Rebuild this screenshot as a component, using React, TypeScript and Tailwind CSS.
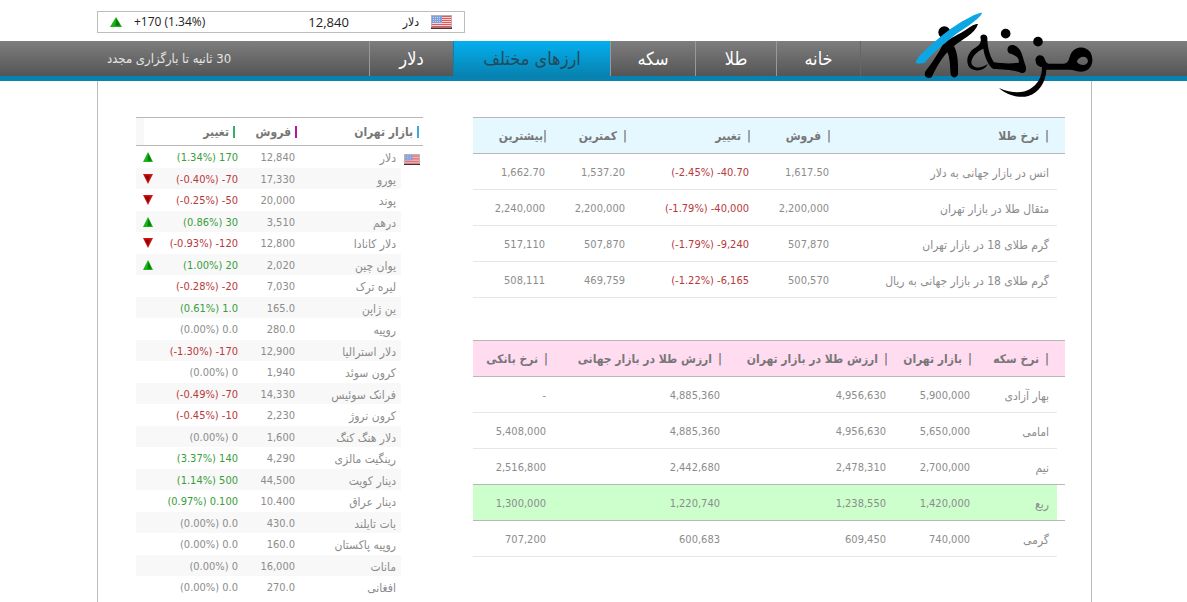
import React from 'react';

type Tone = 'up' | 'down' | 'flat';

const toneClass: Record<Tone, string> = {
  up: 'text-[#3a9d3a]',
  down: 'text-[#b8383c]',
  flat: 'text-[#8c8c8c]',
};

const currencies: [string, string, string, Tone, boolean?][] = [
  ['دلار', '12,840', '(1.34%) 170', 'up', true],
  ['یورو', '17,330', '(-0.40%) -70', 'down', true],
  ['پوند', '20,000', '(-0.25%) -50', 'down', true],
  ['درهم', '3,510', '(0.86%) 30', 'up', true],
  ['دلار کانادا', '12,800', '(-0.93%) -120', 'down', true],
  ['یوان چین', '2,020', '(1.00%) 20', 'up', true],
  ['لیره ترک', '7,030', '(-0.28%) -20', 'down'],
  ['ین ژاپن', '165.0', '(0.61%) 1.0', 'up'],
  ['روپیه', '280.0', '(0.00%) 0.0', 'flat'],
  ['دلار استرالیا', '12,900', '(-1.30%) -170', 'down'],
  ['کرون سوئد', '1,940', '(0.00%) 0', 'flat'],
  ['فرانک سوئیس', '14,330', '(-0.49%) -70', 'down'],
  ['کرون نروژ', '2,230', '(-0.45%) -10', 'down'],
  ['دلار هنگ کنگ', '1,600', '(0.00%) 0', 'flat'],
  ['رینگیت مالزی', '4,290', '(3.37%) 140', 'up'],
  ['دینار کویت', '44,500', '(1.14%) 500', 'up'],
  ['دینار عراق', '10.400', '(0.97%) 0.100', 'up'],
  ['بات تایلند', '430.0', '(0.00%) 0.0', 'flat'],
  ['روپیه پاکستان', '160.0', '(0.00%) 0.0', 'flat'],
  ['مانات', '16,000', '(0.00%) 0', 'flat'],
  ['افغانی', '270.0', '(0.00%) 0.0', 'flat'],
];

const gold: string[][] = [
  ['انس در بازار جهانی به دلار', '1,617.50', '(-2.45%) -40.70', '1,537.20', '1,662.70'],
  ['مثقال طلا در بازار تهران', '2,200,000', '(-1.79%) -40,000', '2,200,000', '2,240,000'],
  ['گرم طلای 18 در بازار تهران', '507,870', '(-1.79%) -9,240', '507,870', '517,110'],
  ['گرم طلای 18 در بازار جهانی به ریال', '500,570', '(-1.22%) -6,165', '469,759', '508,111'],
];

const coins: string[][] = [
  ['بهار آزادی', '5,900,000', '4,956,630', '4,885,360', '-'],
  ['امامی', '5,650,000', '4,956,630', '4,885,360', '5,408,000'],
  ['نیم', '2,700,000', '2,478,310', '2,442,680', '2,516,800'],
  ['ربع', '1,420,000', '1,238,550', '1,220,740', '1,300,000'],
  ['گرمی', '740,000', '609,450', '600,683', '707,200'],
];

function Arrow({ up, className }: { up: boolean; className: string }) {
  return (
    <svg viewBox="0 0 10 10" preserveAspectRatio="none" className={className} aria-hidden="true">
      {up ? (
        <>
          <path d="M5 0 10 10H0Z" fill="#17b517" />
          <path d="M5.4 1.5 8.6 8.8H4.4Z" fill="#0a7a0a" />
        </>
      ) : (
        <>
          <path d="M0 0H10L5 10Z" fill="#d21414" />
          <path d="M1.6 1.4H7L5 8Z" fill="#8e0505" />
        </>
      )}
    </svg>
  );
}

function Flag({ className }: { className: string }) {
  return (
    <svg viewBox="0 0 21 14" preserveAspectRatio="none" className={className} aria-hidden="true">
      <rect width="21" height="14" fill="#f3d5d5" />
      {[1, 3, 5, 7, 9, 11].map((y) => (
        <rect key={y} x="1" y={y} width="19" height="1" fill="#e2575c" />
      ))}
      <rect x="1" y="1" width="10" height="7" fill="#7ba0dc" />
      <path d="M2 2.5H10M2 4.5H10M2 6.5H10" stroke="#d4e1f6" strokeWidth="0.8" strokeDasharray="1 1" />
      <rect x="0.5" y="0.5" width="20" height="13" fill="none" stroke="#b9aeb4" />
      <path d="M0 13.2H21" stroke="#4a1c26" strokeWidth="1.4" />
    </svg>
  );
}

function Logo() {
  return (
    <svg viewBox="168 24 540 270" className="h-[90px] w-[180px]" role="img" aria-label="مزنه">
      {/* leaping figure */}
      <circle cx="253" cy="97" r="18" />
      <path d="M354 73C346 69 330 82 312 93C290 107 262 118 248 134C235 160 215 190 197 213C189 227 200 239 215 232C226 208 242 178 262 157C270 172 270 203 272 222C275 236 291 235 294 222C295 195 294 160 282 138C302 122 346 100 354 73Z" />
      <path
        d="M367 38C350 38 312 60 286 77C254 97 206 140 177 168C171 176 177 180 158 188C170 190 184 192 194 188C222 156 248 135 277 111C306 87 356 62 367 38Z"
        fill="#0ca6e4"
      />
      {/* heh */}
      <path d="M361 112C361 100 382 100 382 114C382 136 387 165 402 187C430 191 456 191 476 188C480 172 462 164 447 160C436 147 446 132 462 136C486 143 487 170 497 198C500 214 496 220 484 219C466 210 425 208 400 207C384 196 373 168 370 146C350 154 334 172 334 188C336 204 362 208 383 192C376 212 343 218 328 202C314 180 326 154 346 143C360 135 365 126 361 112Z" />
      <circle cx="437" cy="101" r="14.500" />
      {/* zeh */}
      <circle cx="534" cy="125" r="14.500" />
      <path d="M527 184C523 167 545 159 553 174C556 183 558 189 566 191H612C626 190 626 178 632 163C642 139 676 135 691 157C705 183 694 214 665 215C650 215 640 208 624 209H559C558 246 537 278 505 288C477 296 440 285 417 264C455 281 488 280 509 268C533 254 546 232 546 202C536 200 528 195 527 184ZM650 185C660 198 682 199 684 183C682 166 659 165 650 185Z" fillRule="evenodd" />
    </svg>
  );
}

function DataTable({
  label,
  heads,
  widths,
  rows,
  headClass,
  tightLast,
  changeColumn,
  highlight,
}: {
  label: string;
  heads: string[];
  widths: string[];
  rows: string[][];
  headClass: string;
  tightLast?: boolean;
  changeColumn?: number;
  highlight?: number;
}) {
  return (
    <table aria-label={label} className="w-full table-fixed border-separate border-spacing-0 text-right">
      <colgroup>
        <col className="w-2" />
        {widths.map((w, i) => (
          <col key={i} className={w} />
        ))}
      </colgroup>
      <thead>
        <tr className={headClass}>
          {heads.map((h, i) => (
            <th
              key={h}
              scope="col"
              colSpan={i === 0 ? 2 : 1}
              className={`h-[37px] border-y border-[#b8b8b8] p-0 text-xs font-bold whitespace-nowrap text-[#777] ${i === 0 ? 'pr-4' : 'pr-1.5'}`}
            >
              |<span className={tightLast && i === heads.length - 1 ? '' : 'mr-1.5'}>{h}</span>
            </th>
          ))}
        </tr>
      </thead>
      <tbody>
        {rows.map((row, r) => {
          const on = r === highlight;
          const dark = on || (highlight !== undefined && r === highlight - 1);
          return (
            <tr key={row[0]}>
              <td className={dark ? 'border-b border-[#b8b8b8] p-0' : 'p-0'} />
              {row.map((cell, c) => (
                <td
                  key={c}
                  dir={c === 0 ? 'rtl' : 'ltr'}
                  className={`h-9 border-b p-0 pt-0.5 pr-2 text-right whitespace-nowrap ${dark ? 'border-[#b8b8b8]' : 'border-[#e6e6e6]'} ${on ? 'bg-[#ccffcc]' : ''} ${c === 0 ? 'text-xs' : ''} ${c === changeColumn ? 'text-[#b8383c]' : 'text-[#8c8c8c]'}`}
                >
                  {cell}
                </td>
              ))}
            </tr>
          );
        })}
      </tbody>
    </table>
  );
}

const navItems: [string, string, boolean?][] = [
  ['خانه', 'w-[84px]'],
  ['طلا', 'w-[81px]'],
  ['سکه', 'w-[85px]'],
  ['ارزهای مختلف', 'w-[157px]', true],
  ['دلار', 'w-[84px]'],
];

const sideHeads: [string, string, string][] = [
  ['بازار تهران', 'pr-1', 'bg-[#3fa9d6]'],
  ['فروش', 'pr-1', 'bg-[#b3189c]'],
  ['تغییر', 'pr-2', 'bg-[#35b06a]'],
];

export default function App() {
  return (
    <div
      dir="rtl"
      className="flex min-h-screen flex-col bg-white pl-0.5 font-['DejaVu_Sans_Condensed','DejaVu_Sans',sans-serif] text-[11px] leading-4"
    >
      <header>
        <div className="mx-auto flex h-[41px] w-full max-w-[995px] justify-end pt-[11px]">
          <div className="flex h-[22px] w-[368px] items-center border border-[#bdbdbd] px-3 text-[#222]">
            <Flag className="h-[14px] w-[21px]" />
            <span className="mr-3 text-xs">دلار</span>
            <span dir="ltr" className="mr-[54px] font-['Open_Sans',sans-serif] text-[13px]">12,840</span>
            <span dir="ltr" className="mr-auto font-['Open_Sans',sans-serif] text-xs">+170 (1.34%)</span>
            <Arrow up className="mr-3 h-[10px] w-[12px]" />
          </div>
        </div>
        <div className="-ml-0.5 h-10 border-b-[5px] border-[#0782b1] bg-linear-to-b from-[#7e7e7e] to-[#555] pl-0.5">
          <div className="mx-auto flex h-full w-full max-w-[995px]">
            <a href="#home" className="relative block w-[232px] shrink-0 border-l border-[#666]">
              <span className="absolute -top-[33px] -right-1 z-10">
                <Logo />
              </span>
            </a>
            <nav className="flex">
              {navItems.map(([label, width, active]) => (
                <a
                  key={label}
                  href="#"
                  className={`flex h-[35px] shrink-0 items-center justify-center border-l text-lg ${width} ${active ? 'border-[#0782b1] bg-linear-to-b from-[#03b0f0] to-[#0782b1] text-[#234a5a]' : 'border-[#999] text-white'}`}
                >
                  {label}
                </a>
              ))}
            </nav>
            <p className="mr-auto pt-[10px] pl-[10px] text-[13px] leading-4 text-[#e4e4e4]">30 ثانیه تا بارگزاری مجدد</p>
          </div>
        </div>
      </header>

      <main className="mx-auto flex w-full max-w-[995px] grow items-start justify-between border-x border-[#bbb] pt-9 pr-[26px] pl-[38px]">
        <div className="flex w-[592px] flex-col gap-[42px]">
          <DataTable
            label="نرخ طلا"
            heads={['نرخ طلا', 'فروش', 'تغییر', 'کمترین', 'بیشترین']}
            widths={['w-[220px]', 'w-[80px]', 'w-[124px]', 'w-[80px]', 'w-[80px]']}
            rows={gold}
            headClass="bg-[#e5f8ff]"
            tightLast
            changeColumn={2}
          />
          <DataTable
            label="نرخ سکه"
            heads={['نرخ سکه', 'بازار تهران', 'ارزش طلا در بازار تهران', 'ارزش طلا در بازار جهانی', 'نرخ بانکی']}
            widths={['w-[79px]', 'w-[84px]', 'w-[166px]', 'w-[174px]', 'w-[81px]']}
            rows={coins}
            headClass="bg-[#ffdcf0]"
            highlight={3}
          />
        </div>

        <table aria-label="بازار تهران" className="w-[287px] table-fixed border-separate border-spacing-0 text-right">
          <colgroup>
            <col className="w-[22px]" />
            <col className="w-[100px]" />
            <col className="w-[58px]" />
            <col className="w-[83px]" />
            <col className="w-[24px]" />
          </colgroup>
          <thead>
            <tr>
              {sideHeads.map(([label, pad, bar], i) => (
                <th
                  key={label}
                  scope="col"
                  colSpan={i === 0 ? 2 : 1}
                  className={`h-[29px] border-y border-[#b8b8b8] p-0 text-xs font-bold whitespace-nowrap text-[#777] ${pad}`}
                >
                  <span className="flex items-center gap-1">
                    <span className={`h-3 w-0.5 ${bar}`} />
                    {label}
                  </span>
                </th>
              ))}
              <td className="border-y border-[#b8b8b8] p-0">
                <div className="mr-auto h-[27px] w-2 bg-[#f8f8f8]" />
              </td>
            </tr>
          </thead>
          <tbody>
            {currencies.map(([name, price, change, tone, arrow], i) => {
              const stripe = i % 2 ? 'h-[21px] bg-[#f8f8f8]' : 'h-[22px]';
              return (
                <tr key={name}>
                  <td className="p-0">{i === 0 && <Flag className="mt-1 mr-[3px] h-[11px] w-4" />}</td>
                  <td className={`p-0 pt-0.5 pr-[5px] text-xs whitespace-nowrap text-[#8c8c8c] ${stripe}`}>{name}</td>
                  <td dir="ltr" className={`p-0 pt-0.5 pr-[6px] text-right text-[#8c8c8c] ${stripe}`}>{price}</td>
                  <td dir="ltr" className={`p-0 pt-0.5 pr-[5px] text-right whitespace-nowrap ${toneClass[tone]} ${stripe}`}>{change}</td>
                  <td className={`p-0 ${stripe}`}>
                    {arrow && <Arrow up={tone === 'up'} className="mx-auto h-[10px] w-[10px]" />}
                  </td>
                </tr>
              );
            })}
          </tbody>
        </table>
      </main>
    </div>
  );
}
